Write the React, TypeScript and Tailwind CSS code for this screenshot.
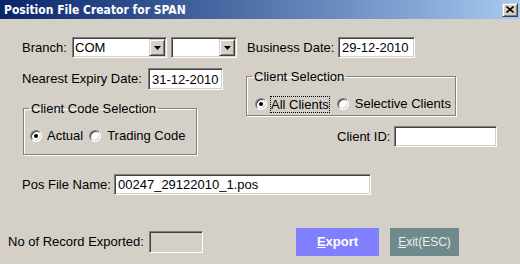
import React from 'react';

const sunken =
  'border border-t-[#808080] border-l-[#808080] border-b-white border-r-white shadow-[inset_1px_1px_0_#404040,inset_-1px_-1px_0_#d4d0c8]';
const raised =
  'bg-[#D4D0C8] border border-t-[#D4D0C8] border-l-[#D4D0C8] border-b-[#404040] border-r-[#404040] shadow-[inset_1px_1px_0_#ffffff,inset_-1px_-1px_0_#808080]';
const groupBox =
  'border border-[#808080] shadow-[1px_1px_0_#ffffff,inset_1px_1px_0_#ffffff]';

const Combo: React.FC<{ value?: string; className?: string }> = ({ value = '', className = '' }) => (
  <div className={`h-[21px] bg-white flex items-center ${sunken} ${className}`}>
    <span className="flex-1 pl-[2px] leading-none">{value}</span>
    <span className={`w-[16px] h-[17px] mr-[1px] flex items-center justify-center ${raised}`}>
      <svg width="7" height="4" viewBox="0 0 7 4">
        <path d="M0 0h7L3.5 4z" fill="#000" />
      </svg>
    </span>
  </div>
);

const TextBox: React.FC<{ value?: string; className?: string; disabled?: boolean }> = ({
  value = '',
  className = '',
  disabled = false
}) => (
  <div className={`flex items-center pl-[3px] ${disabled ? 'bg-[#D4D0C8]' : 'bg-white'} ${sunken} ${className}`}>
    <span className="leading-none">{value}</span>
  </div>
);

const Radio: React.FC<{ checked?: boolean }> = ({ checked = false }) => (
  <span className="w-[12px] h-[12px] rounded-full bg-white flex items-center justify-center border border-t-[#808080] border-l-[#808080] border-b-white border-r-white shadow-[inset_1px_1px_0_#404040,inset_-1px_-1px_0_#d4d0c8]">
    {checked && <span className="w-[4px] h-[4px] rounded-full bg-black" />}
  </span>
);

export default function App() {
  return (
    <div className="w-[520px] h-[264px] bg-[#D4D0C8] font-['Liberation_Sans',Arial,sans-serif] text-[13px] text-black overflow-hidden">
      {/* Title bar */}
      <div className="h-[19px] flex items-center justify-between pl-[4px] pr-[2px] bg-linear-to-r from-[#0A246A] to-[#A6CAF0]">
        <span className="font-['DejaVu_Sans_Condensed','DejaVu_Sans',sans-serif] font-bold text-[12px] text-white">
          Position File Creator for SPAN
        </span>
        <span className={`w-[16px] h-[14px] flex items-center justify-center ${raised}`}>
          <svg width="8" height="7" viewBox="0 0 8 7">
            <path d="M0.5 0.5L7.5 6.5M7.5 0.5L0.5 6.5" stroke="#000" strokeWidth="1.6" />
          </svg>
        </span>
      </div>

      <div className="pt-[18px]">
        {/* Branch / Business date */}
        <div className="flex items-center h-[21px] pl-[22px]">
          <span className="w-[50px]">Branch:</span>
          <Combo value="COM" className="w-[95px]" />
          <Combo className="w-[66px] ml-[4px]" />
          <span className="w-[91px] ml-[10px]">Business Date:</span>
          <TextBox value="29-12-2010" className="w-[77px] h-[21px]" />
        </div>

        <div className="flex mt-[10px]">
          {/* Left column */}
          <div className="w-[246px] pl-[22px]">
            <div className="flex items-center h-[22px]">
              <span className="w-[126px]">Nearest Expiry Date:</span>
              <TextBox value="31-12-2010" className="w-[75px] h-[22px]" />
            </div>
            <fieldset className={`ml-[1px] mt-[11px] w-[174px] h-[54px] ${groupBox}`}>
              <legend className="ml-[5px] px-[2px] leading-[15px]">Client Code Selection</legend>
              <div className="flex items-center h-[40px] pl-[6px]">
                <Radio checked />
                <span className="ml-[5px]">Actual</span>
                <span className="ml-[6px]">
                  <Radio />
                </span>
                <span className="ml-[6px]">Trading Code</span>
              </div>
            </fieldset>
          </div>

          {/* Right column */}
          <div className="flex-1">
            <fieldset className={`mt-[1px] w-[210px] h-[47px] ${groupBox}`}>
              <legend className="ml-[5px] px-[2px] leading-[15px]">Client Selection</legend>
              <div className="flex items-center h-[40px] pl-[8px]">
                <Radio checked />
                <span className="ml-[3px] px-[1px] outline outline-1 outline-dotted outline-black -outline-offset-1 leading-[17px]">
                  All Clients
                </span>
                <span className="ml-[7px]">
                  <Radio />
                </span>
                <span className="ml-[6px]">Selective Clients</span>
              </div>
            </fieldset>
            <div className="flex items-center h-[21px] mt-[10px] pl-[91px]">
              <span className="w-[57px]">Client ID:</span>
              <TextBox className="w-[103px] h-[21px]" />
            </div>
          </div>
        </div>

        {/* Pos file name */}
        <div className="flex items-center h-[21px] mt-[19px] pl-[22px]">
          <span className="w-[92px]">Pos File Name:</span>
          <TextBox value="00247_29122010_1.pos" className="w-[257px] h-[21px]" />
        </div>

        {/* Footer */}
        <div className="flex items-center h-[28px] mt-[33px] pl-[8px]">
          <span className="w-[141px]">No of Record Exported:</span>
          <TextBox disabled className="w-[54px] h-[22px]" />
          <button className="ml-[93px] w-[83px] h-[28px] bg-[#7F7FFF] text-white font-bold text-[13px]">
            <span className="underline">E</span>xport
          </button>
          <button className="ml-[11px] w-[69px] h-[28px] bg-[#6E8A8C] text-[#EEEEEE] text-[12px]">
            <span className="underline">E</span>xit(ESC)
          </button>
        </div>
      </div>
    </div>
  );
}
